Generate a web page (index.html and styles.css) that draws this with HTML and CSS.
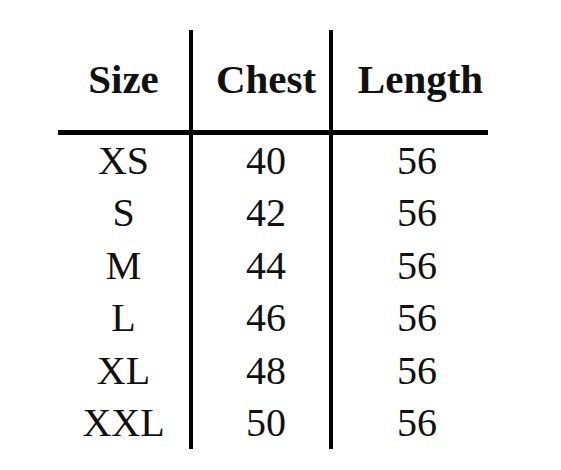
FILE: index.html
```html
<!DOCTYPE html>
<html lang="en">
<head>
<meta charset="utf-8">
<title>Size chart</title>
<link rel="stylesheet" href="styles.css">
</head>
<body>
<div class="chart">
  <div class="cell head c1">Size</div>
  <div class="cell head c2">Chest</div>
  <div class="cell head c3">Length</div>

  <div class="cell c1">XS</div><div class="cell c2">40</div><div class="cell c3">56</div>
  <div class="cell c1">S</div><div class="cell c2">42</div><div class="cell c3">56</div>
  <div class="cell c1">M</div><div class="cell c2">44</div><div class="cell c3">56</div>
  <div class="cell c1">L</div><div class="cell c2">46</div><div class="cell c3">56</div>
  <div class="cell c1">XL</div><div class="cell c2">48</div><div class="cell c3">56</div>
  <div class="cell c1">XXL</div><div class="cell c2">50</div><div class="cell c3">56</div>
</div>
</body>
</html>
```

FILE: styles.css
```css
html, body {
  margin: 0;
  padding: 0;
  background: #ffffff;
}

body {
  padding: 30px 0 0 58px;
}

.chart {
  display: grid;
  grid-template-columns: 135px 140px 155px;
  width: 430px;
  font-family: "Liberation Serif", "Times New Roman", serif;
  color: #111111;
}

.cell {
  box-sizing: border-box;
  text-align: center;
  font-size: 40px;
  line-height: 52.4px;
  height: 52.4px;
  white-space: nowrap;
}

.c1, .c2 {
  border-right: 4px solid #000000;
}

.c2 {
  padding-left: 10px;
}

.c3 {
  padding-left: 13px;
}

.head {
  font-weight: bold;
  font-size: 41px;
  line-height: 44px;
  height: 105px;
  padding-top: 27px;
  border-bottom: 5px solid #000000;
}

.head.c3 {
  padding-left: 20px;
}
```
